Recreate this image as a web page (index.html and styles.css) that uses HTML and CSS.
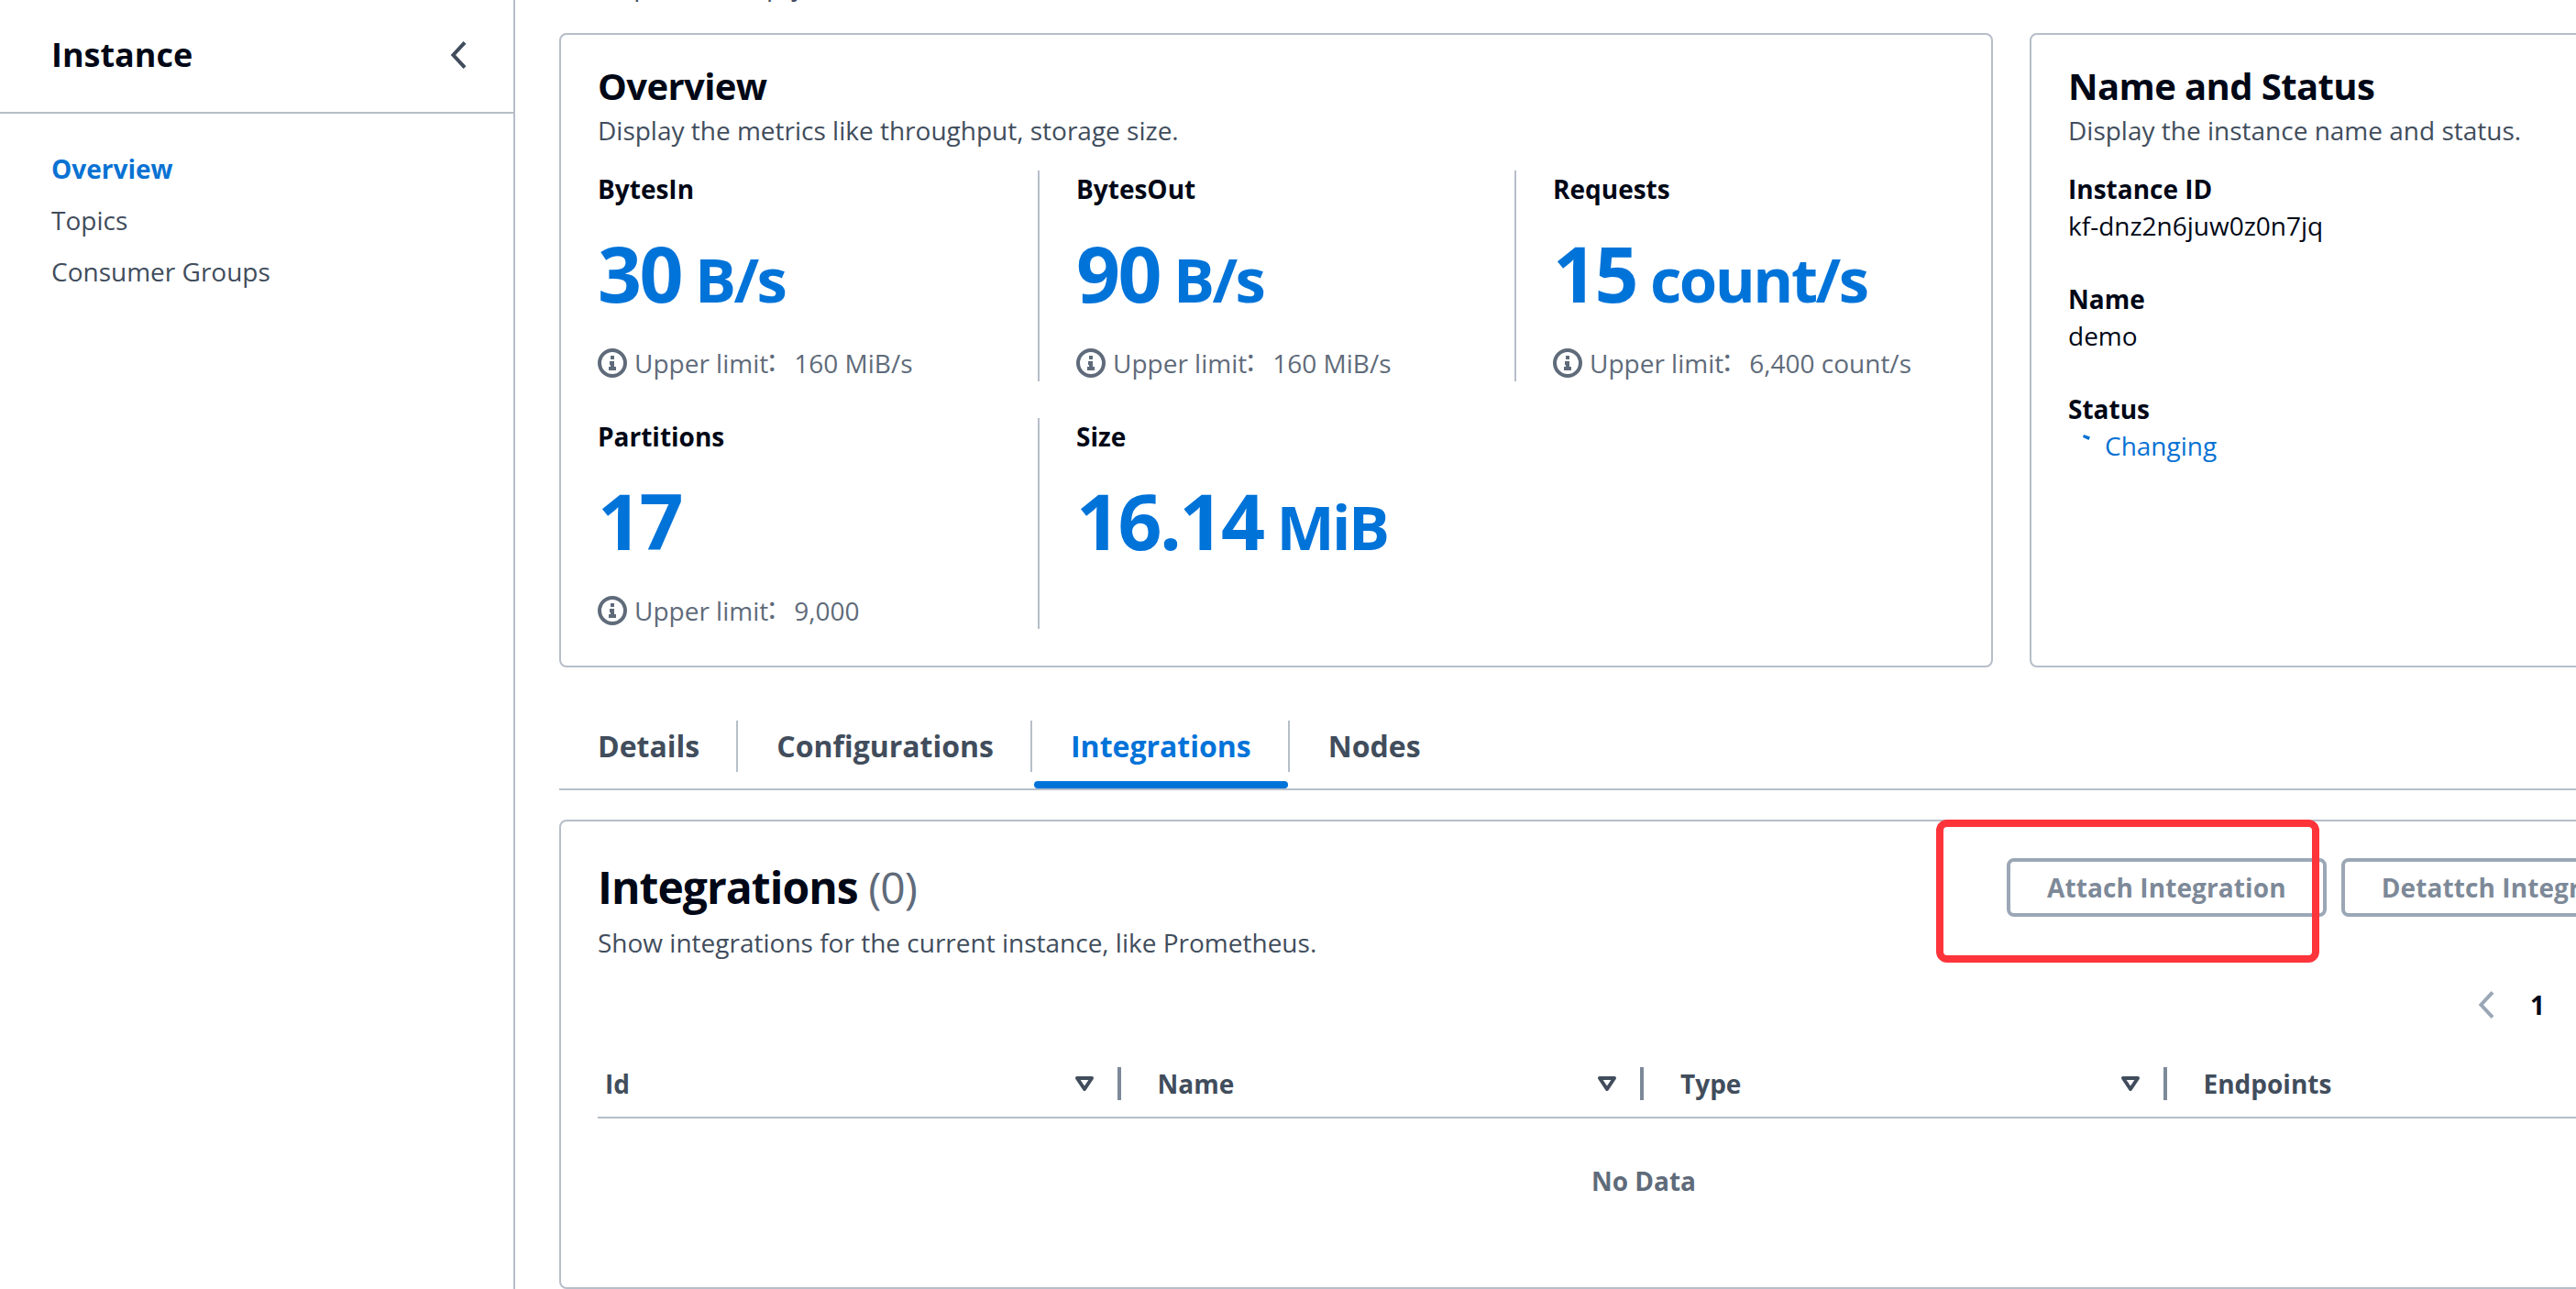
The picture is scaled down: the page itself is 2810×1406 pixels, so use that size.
FILE: index.html
```html
<!DOCTYPE html>
<html lang="en">
<head>
<meta charset="utf-8">
<title>Instance</title>
<link rel="stylesheet" href="styles.css">
</head>
<body>
<svg class="defs" width="0" height="0">
  <symbol id="info" viewBox="0 0 16 16">
    <circle cx="8" cy="8" r="7" fill="none" stroke="currentColor" stroke-width="2"/>
    <path d="M8 11V8H6.500M6 11h4" fill="none" stroke="currentColor" stroke-width="2"/>
    <path d="M7 4h2v2H7z" fill="currentColor"/>
  </symbol>
  <symbol id="chevron" viewBox="0 0 16 16">
    <path d="M11.500 1.200 5.200 8l6.300 6.800" fill="none" stroke="currentColor" stroke-width="2"/>
  </symbol>
  <symbol id="sort" viewBox="0 0 16 16">
    <path d="M4 5h8l-4 6z" fill="none" stroke="currentColor" stroke-width="2" stroke-linejoin="round"/>
  </symbol>
</svg>
<div class="layout">
  <nav class="sidebar">
    <header class="sidebar-header">
      <h2>Instance</h2>
      <svg class="icon"><use href="#chevron"/></svg>
    </header>
    <ul class="nav-list">
      <li class="active">Overview</li>
      <li>Topics</li>
      <li>Consumer Groups</li>
    </ul>
  </nav>
  <main class="content">
    <p class="page-description">Description is empty</p>
    <div class="summary">
      <section class="card overview">
        <h2>Overview</h2>
        <p class="description">Display the metrics like throughput, storage size.</p>
        <div class="metrics">
          <div class="metric"><h3>BytesIn</h3><div class="value">30 <small>B/s</small></div><div class="limit"><svg class="icon"><use href="#info"/></svg><span>Upper limit<i>&#xFF1A;</i>160 MiB/s</span></div></div>
          <div class="metric"><h3>BytesOut</h3><div class="value">90 <small>B/s</small></div><div class="limit"><svg class="icon"><use href="#info"/></svg><span>Upper limit<i>&#xFF1A;</i>160 MiB/s</span></div></div>
          <div class="metric"><h3>Requests</h3><div class="value">15 <small>count/s</small></div><div class="limit"><svg class="icon"><use href="#info"/></svg><span>Upper limit<i>&#xFF1A;</i>6,400 count/s</span></div></div>
          <div class="metric"><h3>Partitions</h3><div class="value">17</div><div class="limit"><svg class="icon"><use href="#info"/></svg><span>Upper limit<i>&#xFF1A;</i>9,000</span></div></div>
          <div class="metric"><h3>Size</h3><div class="value">16.14 <small>MiB</small></div></div>
        </div>
      </section>
      <section class="card status-card">
        <h2>Name and Status</h2>
        <p class="description">Display the instance name and status.</p>
        <dl>
          <dt>Instance ID</dt><dd>kf-dnz2n6juw0z0n7jq</dd>
          <dt>Name</dt><dd>demo</dd>
          <dt>Status</dt><dd class="changing"><svg class="icon" viewBox="0 0 32 32"><path d="M17 4l7 2.500-1.500 3.500-6.500-3z" fill="currentColor"/></svg>Changing</dd>
        </dl>
      </section>
    </div>
    <div class="tabs">
      <div class="tab"><span>Details</span></div>
      <div class="tab"><span>Configurations</span></div>
      <div class="tab selected"><span>Integrations</span></div>
      <div class="tab"><span>Nodes</span></div>
    </div>
    <section class="card integrations">
      <div class="table-top">
        <div class="heading">
          <h1>Integrations <span>(0)</span></h1>
          <p class="description">Show integrations for the current instance, like Prometheus.</p>
        </div>
        <div class="actions">
          <div class="highlighted"><button>Attach Integration</button></div>
          <button>Detattch Integration</button>
        </div>
      </div>
      <div class="pager"><svg class="icon"><use href="#chevron"/></svg><b>1</b></div>
      <div class="table-head">
        <div><span>Id</span><svg class="icon"><use href="#sort"/></svg></div>
        <div><span>Name</span><svg class="icon"><use href="#sort"/></svg></div>
        <div><span>Type</span><svg class="icon"><use href="#sort"/></svg></div>
        <div><span>Endpoints</span></div>
      </div>
      <div class="empty">No Data</div>
    </section>
  </main>
</div>
</body>
</html>
```
FILE: styles.css
```css
*, *::after { box-sizing: border-box; }
html, body { margin: 0; height: 1406px; overflow: hidden; }
body { background: #fff; color: #000716; font: 28px/40px "Open Sans", "Noto Sans", sans-serif; }
h1, h2, h3, p, ul, dl, dd { margin: 0; padding: 0; }
.defs { display: block; height: 0; }
.icon { width: 32px; height: 32px; flex: none; }
.layout { display: flex; height: 1406px; overflow: hidden; }

.sidebar { width: 562px; flex: none; border-right: 2px solid #b6bec9; }
.sidebar-header { display: flex; align-items: center; justify-content: space-between; height: 124px; padding: 0 44px 2px 56px; border-bottom: 2px solid #b6bec9; color: #414d5c; }
.sidebar-header h2 { font-size: 36px; line-height: 44px; color: #000716; }
.nav-list { list-style: none; padding: 40px 56px; color: #414d5c; }
.nav-list li { padding: 0 0 16px; }
.nav-list .active { color: #0972d3; font-weight: 700; }

.content { width: 2414px; flex: none; padding-left: 48px; }
.page-description { height: 36px; line-height: 40px; margin-top: -36px; margin-bottom: 36px; color: #414d5c; }
.summary { display: flex; gap: 40px; height: 692px; }
.card { border: 2px solid #b6bec9; border-radius: 8px; }
.overview { width: 1564px; flex: none; }
.status-card { flex: 1; }
.summary .card { padding: 32px 0 0 40px; }
.summary h2 { font-size: 40px; line-height: 48px; letter-spacing: -.6px; margin-bottom: 4px; }
.description { color: #414d5c; }
.metrics { display: grid; grid-template-columns: repeat(3, 520px); row-gap: 40px; margin: 24px 0 0 -40px; }
.metric { height: 230px; padding-left: 40px; border-left: 2px solid #b6bec9; }
.metric:nth-child(3n+1) { border-color: transparent; padding-left: 38px; }
.metric h3 { font-size: 28px; line-height: 40px; }
.value { height: 120px; margin-top: 12px; font-size: 84px; line-height: 120px; font-weight: 700; letter-spacing: -2.5px; color: #0073d9; white-space: nowrap; }
.value small { font-size: 67px; margin-left: -4.5px; }
.limit { display: flex; align-items: center; gap: 8px; height: 40px; margin-top: 18px; color: #5f6b7a; }
.limit i { display: inline-block; width: 28px; height: 40px; line-height: 34px; text-indent: -3px; vertical-align: top; font-family: "Noto Sans CJK SC", sans-serif; font-style: normal; }

dl { padding-top: 24px; }
dt { font-weight: 700; }
dd { margin-bottom: 40px; }
.changing { display: flex; align-items: center; gap: 8px; color: #0972d3; }

.tabs { display: flex; height: 90px; margin-top: 44px; border-bottom: 2px solid #b6bec9; font-size: 32px; font-weight: 700; color: #414d5c; }
.tab { position: relative; padding-top: 14px; }
.tab span { display: block; height: 56px; line-height: 56px; padding: 0 40px 0 42px; border-right: 2px solid #b6bec9; }
.tab:last-child span { border: 0; }
.tab.selected { color: #0073d9; }
.tab.selected::after { content: ""; position: absolute; left: 2px; right: 2px; bottom: 0; height: 8px; border-radius: 4px; background: #0073d9; }

.integrations { height: 512px; margin-top: 32px; padding-left: 40px; }
.table-top { display: flex; justify-content: space-between; height: 166px; padding-top: 40px; }
.heading { padding-top: 2px; }
h1 { font-size: 48px; line-height: 60px; letter-spacing: -.96px; margin-bottom: 10px; }
h1 span { font-weight: 400; color: #5f6b7a; }
.actions { display: flex; flex: none; align-items: flex-start; gap: 16px; width: 785px; }
button { height: 64px; padding: 0 40px; border: 4px solid #9ba7b6; border-radius: 8px; background: none; color: #7d8998; font: 700 28px/40px "Open Sans", sans-serif; letter-spacing: .1px; white-space: nowrap; }
.highlighted { position: relative; }
.highlighted::after { content: ""; position: absolute; left: -77px; top: -42px; width: 418px; height: 156px; border: 8px solid #fe343b; border-radius: 12px; }
.pager { display: flex; align-items: center; gap: 32px; height: 68px; padding-left: 2044px; color: #9ba7b6; }
.pager b { color: #000716; }
.table-head { display: grid; grid-template-columns: repeat(4, 570.5px); height: 90px; border-bottom: 2px solid #b6bec9; font-weight: 700; color: #414d5c; }
.table-head div { display: flex; align-items: center; justify-content: space-between; height: 36px; margin-top: 34px; padding: 0 20px 0 40px; border-right: 4px solid #7d8998; }
.table-head div:first-child { padding-left: 8px; }
.table-head div:last-child { border: 0; }
.empty { width: 2282px; padding-top: 48px; text-align: center; font-weight: 700; color: #5f6b7a; }
```
